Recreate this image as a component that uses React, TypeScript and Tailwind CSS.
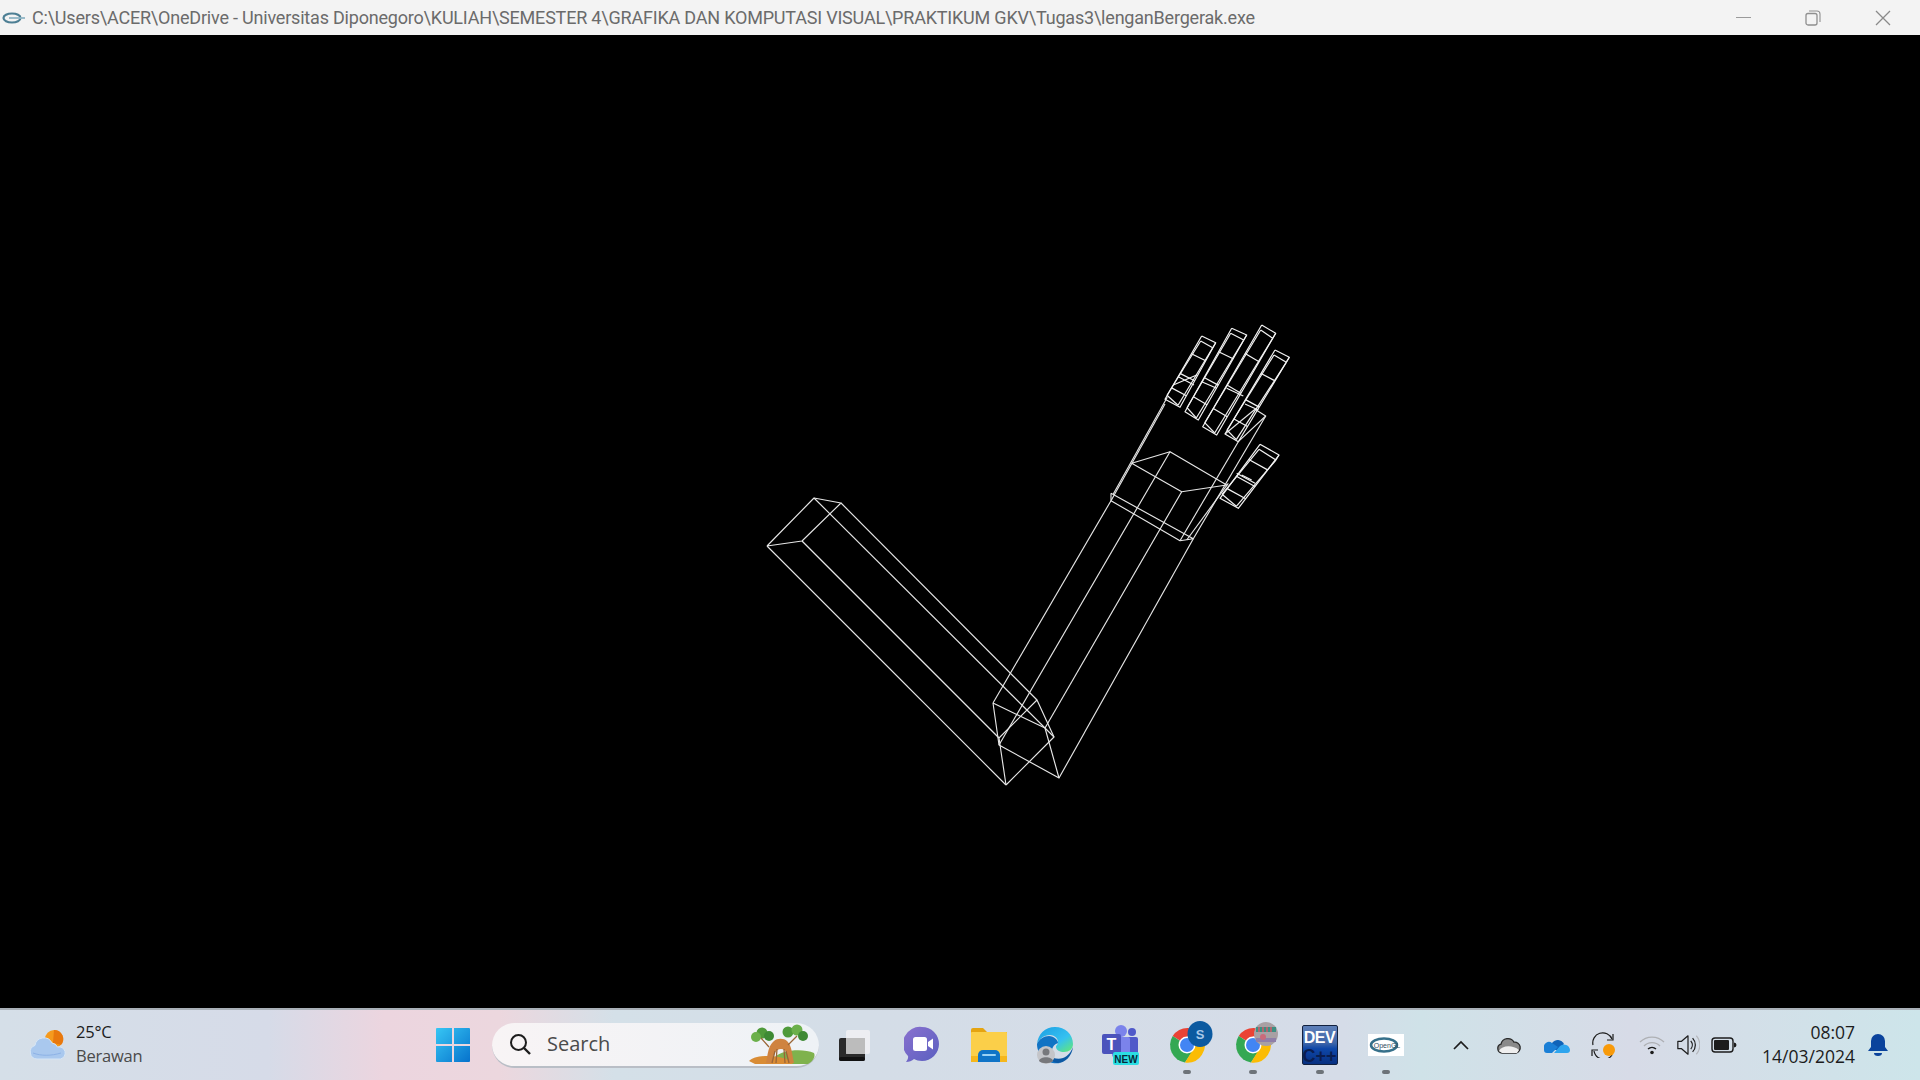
import React from "react";

type P = [number, number];
const z = (x: number, y: number): P => [x / 3 + 1120, y / 3 + 310];
const lerp = (a: P, b: P, t: number): P => [a[0] + (b[0] - a[0]) * t, a[1] + (b[1] - a[1]) * t];
const add = (a: P, dx: number, dy: number): P => [a[0] + dx, a[1] + dy];

const poly = (...pts: P[]) => "M" + pts.map((p) => `${p[0].toFixed(1)} ${p[1].toFixed(1)}`).join("L");

const finger = (tl: P, tr: P, br: P, bl: P) => {
  const out: string[] = [poly(tl, tr, br, bl, tl)];
  const ti = add(tl, -1, 5), tj = add(tr, -3, 5);
  out.push(poly(ti, tj));
  out.push(poly(tj, add(br, -2, -2)));
  out.push(poly(ti, add(bl, 2, -4)));
  out.push(poly(tr, tj));
  [0.28, 0.59, 0.82].forEach((t) => {
    out.push(poly(lerp(tl, bl, t), lerp(tr, br, t)));
  });
  out.push(poly(add(bl, 2, -4), add(br, -2, -2)));
  return out;
};

const upperArm = [
  poly([767, 546], [802, 541], [841, 503], [814, 498], [767, 546]),
  poly([1006, 785], [999, 738], [1037, 700], [1054, 737], [1006, 785]),
  poly([767, 546], [1006, 785]),
  poly([802, 541], [999, 738]),
  poly([841, 503], [1037, 700]),
  poly([814, 498], [1054, 737]),
];

const foreArm = [
  poly([993, 703], [999, 745], [1059, 778], [1045, 728], [993, 703]),
  poly([993, 703], z(-27, 572)),
  poly([999, 745], z(150, 425)),
  poly([1045, 728], z(185, 545)),
  poly([1059, 778], z(220, 686)),
];

const hand = [
  poly(z(35, 460), z(150, 425), z(320, 525), z(185, 545), z(35, 460)),
  poly(z(-27, 550), z(220, 686), z(180, 692), z(-27, 572), z(-27, 550)),
  poly(z(-27, 572), z(135, 282)),
  poly(z(-20, 552), z(142, 262)),
  poly(z(180, 692), z(355, 395)),
  poly(z(220, 686), z(437, 318)),
  poly(z(200, 690), z(325, 520)),
  poly(z(355, 395), z(437, 318), z(405, 298)),
  poly(z(315, 372), z(405, 298)),
];

const fingers = [
  ...finger(z(245, 78), z(287, 98), z(180, 292), z(135, 268)),
  ...finger(z(335, 55), z(380, 75), z(235, 330), z(195, 305)),
  ...finger(z(425, 45), z(467, 70), z(290, 375), z(248, 350)),
  ...finger(z(465, 120), z(508, 142), z(355, 395), z(315, 372)),
  ...finger(z(420, 403), z(477, 435), z(355, 595), z(300, 565)),
  poly(z(160, 225), z(230, 195)),
  poly(z(175, 200), z(222, 225)),
  poly(z(245, 215), z(290, 235)),
  poly(z(320, 235), z(370, 258)),
  poly(z(375, 282), z(415, 300)),
  poly(z(350, 490), z(405, 520)),
  poly(z(365, 495), z(395, 510)),
];

const Wireframe = () => (
  <svg viewBox="0 0 1920 973" className="block w-full h-full">
    <g transform="translate(0 -35)" fill="none" strokeLinejoin="round">
      <g stroke="#e6e6e6" strokeWidth="1.150">
        {[...upperArm, ...foreArm, ...hand].map((d, i) => (
          <path key={i} d={d} />
        ))}
      </g>
      <g stroke="#f2f2f2" strokeWidth="1.200">
        {fingers.map((d, i) => (
          <path key={i} d={d} />
        ))}
      </g>
    </g>
  </svg>
);

const OpenGlMini = () => (
  <svg viewBox="0 0 24 12" className="w-6 h-3">
    <ellipse cx="10" cy="6" rx="8.500" ry="4.500" fill="none" stroke="#4d7f94" strokeWidth="2.200" />
    <path d="M7 6h16" stroke="#8fb5c5" strokeWidth="1.800" />
  </svg>
);

const Weather = () => (
  <svg viewBox="0 0 40 40" className="w-10 h-10">
    <circle cx="27" cy="14" r="9" fill="#f59a1e" />
    <path d="M27 5a9 9 0 0 1 7 15l-8-2z" fill="#e8780e" />
    <path d="M10 34a7 7 0 0 1-2-13.600 9 9 0 0 1 17-2.400 7 7 0 0 1 5.500 4 6 6 0 0 1 3 12z" fill="#a9c8ee" stroke="#d6e6f6" strokeWidth="1" />
    <path d="M6 28c8 3 18 3 28 0" fill="none" stroke="#8db2e6" strokeWidth="1" />
  </svg>
);

const WindowsLogo = () => (
  <svg viewBox="0 0 36 36" className="w-9 h-9">
    <defs>
      <linearGradient id="wg" x1="0" y1="0" x2="1" y2="1">
        <stop offset="0" stopColor="#37c6f4" />
        <stop offset="1" stopColor="#0672cc" />
      </linearGradient>
    </defs>
    <path d="M1 2a1 1 0 0 1 1-1h15v16H1zM19 1h15a1 1 0 0 1 1 1v15H19zM1 19h16v16H2a1 1 0 0 1-1-1zM19 19h16v15a1 1 0 0 1-1 1H19z" fill="url(#wg)" />
  </svg>
);

const Tree = () => (
  <svg viewBox="0 0 70 42" className="w-[70px] h-[42px]">
    <path d="M28 34c6-7 28-9 39-4 2 4-2 9-6 11H40z" fill="#7fb24d" />
    <path d="M2 38c6-6 26-7 40-1l4 4H8z" fill="#d98c35" />
    <circle cx="15" cy="10" r="5.500" fill="#4f9a3a" />
    <circle cx="9" cy="14" r="5" fill="#6bb04a" />
    <circle cx="22" cy="13" r="5" fill="#3e8a34" />
    <circle cx="41" cy="9" r="5.500" fill="#4f9a3a" />
    <circle cx="50" cy="7" r="5.500" fill="#6bb04a" />
    <circle cx="56" cy="13" r="5" fill="#3e8a34" />
    <path d="M19 40c2-10 2-17 8-22 3-3 10-3 13 0 5 5 5 13 7 22h-5c-1-7-2-14-8-14s-8 7-9 14z" fill="#cf8340" />
    <path d="M14 15l8 9M50 13l-9 9M29 40l1-14M38 40l-1-14M25 40l3-12M42 40l-3-12" stroke="#9a6536" strokeWidth="1.300" fill="none" />
  </svg>
);

const TaskView = () => (
  <svg viewBox="0 0 34 34" className="w-[34px] h-[34px]">
    <rect x="2" y="10" width="26" height="23" rx="2" fill="#2a2a2a" />
    <rect x="2" y="29" width="26" height="4" rx="2" fill="#111" />
    <rect x="9" y="2" width="24" height="24" rx="2" fill="#f1f1f3" opacity="0.85" />
    <rect x="9" y="10" width="19" height="16" fill="#b9b9b9" opacity="0.9" />
  </svg>
);

const Chat = () => (
  <svg viewBox="0 0 36 40" className="w-9 h-10">
    <defs>
      <linearGradient id="cg" x1="0" y1="0" x2="1" y2="1">
        <stop offset="0" stopColor="#8a71cf" />
        <stop offset="1" stopColor="#5a5fc0" />
      </linearGradient>
    </defs>
    <path d="M18 2a17 17 0 0 1 0 34c-3 0-6-.7-8-2-2 2-5 3-8 3 1.500-2 2.500-4 2-6A17 17 0 0 1 18 2z" fill="url(#cg)" />
    <rect x="9" y="12" width="14" height="14" rx="2.500" fill="#fff" />
    <path d="M24 17l5-3.500v11L24 21z" fill="#fff" />
  </svg>
);

const Folder = () => (
  <svg viewBox="0 0 38 36" className="w-[38px] h-9">
    <path d="M1 3a2 2 0 0 1 2-2h10l4 4h20v8H1z" fill="#e5a411" />
    <rect x="1" y="5" width="36" height="30" rx="1" fill="#fbcf49" />
    <rect x="1" y="29" width="36" height="6" fill="#f5b71c" />
    <path d="M8 35v-7a5 5 0 0 1 5-5h12a5 5 0 0 1 5 5v7z" fill="#0f74c7" />
    <rect x="12" y="27" width="14" height="2" rx="1" fill="#9ad2f4" />
  </svg>
);

const Edge = () => (
  <svg viewBox="0 0 38 40" className="w-[38px] h-10">
    <defs>
      <linearGradient id="eg" x1="0" y1="0" x2="1" y2="1">
        <stop offset="0" stopColor="#1b9de2" />
        <stop offset="0.6" stopColor="#35c1f1" />
        <stop offset="1" stopColor="#66eb6e" />
      </linearGradient>
    </defs>
    <path d="M19 2c10 0 18 7 18 17 0 5-4 8-9 8-4 0-8-2-8-5 0-2 2-2 2-5 0-4-4-7-8-7-6 0-11 4-13 9C2 9 9 2 19 2z" fill="url(#eg)" />
    <path d="M1 19c2-5 7-8 12-8 5 0 9 4 9 7-2 1-5 2-6 7-1 5 2 11 8 13-12 2-23-7-23-19z" fill="#1173c4" />
    <path d="M37 22c-1 9-8 16-15 16-5 0-8-4-9-8 3 3 9 5 14 3 5-2 8-6 10-11z" fill="#0c59a4" />
    <circle cx="10" cy="30" r="9" fill="#c4c5c9" />
    <circle cx="10" cy="27" r="3.500" fill="#77787c" />
    <path d="M3 36c1-5 13-5 14 0-3 3-11 3-14 0z" fill="#77787c" />
  </svg>
);

const Teams = () => (
  <svg viewBox="0 0 38 42" className="w-[38px] h-[42px]">
    <circle cx="19" cy="7" r="6" fill="#7b83eb" />
    <circle cx="30" cy="8" r="4" fill="#5059c9" />
    <rect x="22" y="13" width="14" height="17" rx="2" fill="#5059c9" />
    <rect x="10" y="13" width="18" height="20" rx="2" fill="#7b83eb" />
    <rect x="0" y="10" width="19" height="20" rx="2" fill="#4b53bc" />
    <text x="9.500" y="26" textAnchor="middle" fontSize="16" fontWeight="700" fill="#fff" fontFamily="'Liberation Sans', sans-serif">T</text>
    <rect x="11" y="28" width="26" height="13" rx="2" fill="#2bdde3" />
    <text x="24" y="38.500" textAnchor="middle" fontSize="10" fontWeight="700" fill="#062b3a" fontFamily="'Liberation Sans', sans-serif">NEW</text>
  </svg>
);

const ChromeBase = () => (
  <g>
    <path d="M20 22L5.700 13A17.500 17.500 0 0 1 35.500 13.500L20 13.500z" fill="#ea4335" />
    <path d="M5.700 13A17.500 17.500 0 0 0 18 39.500l8-12-6-5z" fill="#34a853" />
    <path d="M35.500 13.500A17.500 17.500 0 0 1 18 39.500l8-13 2-8z" fill="#fbbc05" />
    <circle cx="20" cy="22" r="8.500" fill="#fff" />
    <circle cx="20" cy="22" r="7" fill="#4285f4" />
  </g>
);

const Chrome1 = () => (
  <svg viewBox="-4 0 48 44" className="w-12 h-11 overflow-visible">
    <ChromeBase />
    <ellipse cx="33" cy="11" rx="12.500" ry="13" fill="#0c5aa0" />
    <text x="33" y="16" textAnchor="middle" fontSize="13" fontWeight="700" fill="#a8c8e8" fontFamily="'Liberation Sans', sans-serif">S</text>
  </svg>
);

const Chrome2 = () => (
  <svg viewBox="-4 0 48 44" className="w-12 h-11 overflow-visible">
    <ChromeBase />
    <circle cx="33" cy="11" r="12" fill="#a8a0a4" />
    <path d="M23 4h20v5H23z" fill="#3d8f83" />
    <path d="M26 4v5M30 4v5M34 4v5M38 4v5" stroke="#d35b6a" strokeWidth="1.500" />
    <path d="M23 15h20v4H23z" fill="#8f7fa8" />
    <circle cx="30" cy="14" r="3" fill="#c96a7a" />
  </svg>
);

const Dev = () => (
  <div className="w-9 h-[40px] rounded-[2px] bg-[linear-gradient(180deg,#5d7fb8_0%,#3f66a8_45%,#0e47a8_60%,#072f80_100%)] border border-[#12213f] flex flex-col items-center overflow-hidden font-['Liberation_Sans',sans-serif] font-bold leading-none">
    <span className="text-white text-[16px] mt-[4px] tracking-tight">DEV</span>
    <span className="text-[#0a1d50] text-[18px] mt-[1px] whitespace-nowrap">C++</span>
  </div>
);

const OpenGl = () => (
  <div className="w-9 h-[22px] bg-white flex items-center justify-center">
    <svg viewBox="0 0 36 22" className="w-9 h-[22px]">
      <ellipse cx="16" cy="11" rx="13" ry="6.500" fill="none" stroke="#36708a" strokeWidth="2.500" />
      <text x="19" y="13.500" textAnchor="middle" fontSize="7" fill="#2f4f5f" fontFamily="'Liberation Sans', sans-serif">OpenGL</text>
    </svg>
  </div>
);

const Chevron = () => (
  <svg viewBox="0 0 20 20" className="w-5 h-5">
    <path d="M3 14l7-7 7 7" fill="none" stroke="#1c1c1c" strokeWidth="1.700" />
  </svg>
);

const GrayCloud = () => (
  <svg viewBox="0 0 26 18" className="w-[26px] h-[18px]">
    <path d="M6 17a4.500 4.500 0 0 1-1-8.800 7 7 0 0 1 13-2 5.500 5.500 0 0 1 2 10.800z" fill="#8a8a8a" stroke="#2a2a2a" strokeWidth="1.300" />
    <path d="M3 15c3-6 14-6 20-1l-2 3H6z" fill="#efefef" />
  </svg>
);

const OneDrive = () => (
  <svg viewBox="0 0 26 18" className="w-[26px] h-[18px]">
    <path d="M8 7a7 7 0 0 1 12 1l-6 6H5z" fill="#0f63b8" />
    <path d="M0 12a5 5 0 0 1 8-5l6 4-6 6H3a3 3 0 0 1-3-3z" fill="#1a7fd6" />
    <path d="M10 17l6-7a6 6 0 0 1 10 4 3 3 0 0 1-3 3z" fill="#2ea5ee" />
  </svg>
);

const Sync = () => (
  <svg viewBox="0 0 26 26" className="w-[26px] h-[26px]">
    <path d="M2 13A10 10 0 0 1 21 7" fill="none" stroke="#1a1a1a" strokeWidth="1.200" />
    <path d="M22 2v6h-6" fill="none" stroke="#1a1a1a" strokeWidth="1.200" />
    <path d="M21 23A10 10 0 0 1 3 19" fill="none" stroke="#1a1a1a" strokeWidth="1.200" />
    <path d="M1 24v-6h6" fill="none" stroke="#1a1a1a" strokeWidth="1.200" />
    <circle cx="18" cy="18" r="6" fill="#f89a0a" />
  </svg>
);

const Wifi = () => (
  <svg viewBox="0 0 26 20" className="w-[26px] h-5">
    <path d="M1 7a17 17 0 0 1 24 0M5 11a11 11 0 0 1 16 0" fill="none" stroke="#aeb0b4" strokeWidth="1.300" />
    <path d="M9 14a6 6 0 0 1 8 0" fill="none" stroke="#1c1c1c" strokeWidth="1.400" />
    <circle cx="13" cy="17.500" r="1.800" fill="#1c1c1c" />
  </svg>
);

const Volume = () => (
  <svg viewBox="0 0 26 26" className="w-6 h-6">
    <path d="M2 9h4l7-6v20l-7-6H2z" fill="none" stroke="#1c1c1c" strokeWidth="1.300" strokeLinejoin="round" />
    <path d="M16 8.500a7 7 0 0 1 0 9" fill="none" stroke="#1c1c1c" strokeWidth="1.300" />
    <path d="M18 5.500a11 11 0 0 1 0 15" fill="none" stroke="#1c1c1c" strokeWidth="1.300" />
    <path d="M22 3a15 15 0 0 1 0 20" fill="none" stroke="#b5b7bc" strokeWidth="1.300" />
  </svg>
);

const Battery = () => (
  <svg viewBox="0 0 26 18" className="w-[26px] h-[18px]">
    <rect x="1" y="2" width="21" height="14" rx="3" fill="none" stroke="#1c1c1c" strokeWidth="1.400" />
    <rect x="3" y="4" width="15" height="10" rx="1" fill="#1c1c1c" />
    <path d="M23 6.500a2.500 2.500 0 0 1 0 5z" fill="#1c1c1c" />
  </svg>
);

const Bell = () => (
  <svg viewBox="0 0 22 24" className="w-[22px] h-6">
    <path d="M11 1a7 7 0 0 1 7 7v6l3 4H1l3-4V8a7 7 0 0 1 7-7z" fill="#0a439c" />
    <path d="M7 20h8a4 3 0 0 1-8 0z" fill="#0a439c" />
  </svg>
);

const Cell = ({ w, dot, children }: { w: string; dot?: boolean; children: React.ReactNode }) => (
  <div className={`${w} relative h-full flex items-center justify-center shrink-0`}>
    {children}
    {dot && <div className="absolute bottom-[6px] left-1/2 -translate-x-1/2 w-2 h-1 rounded-full bg-[#6d7379]" />}
  </div>
);

export default function App() {
  return (
    <div className="w-[1920px] h-[1080px] flex flex-col overflow-hidden bg-black font-['Open_Sans',sans-serif]">
      <header className="h-[35px] shrink-0 bg-[#f3f3f3] flex items-center">
        <div className="pl-[2px] w-[32px] flex items-center shrink-0"><OpenGlMini /></div>
        <div className="text-[18px] leading-none text-[#6b6b6b] whitespace-nowrap tracking-[-0.2px] font-['Roboto',sans-serif]">
          C:\Users\ACER\OneDrive - Universitas Diponegoro\KULIAH\SEMESTER 4\GRAFIKA DAN KOMPUTASI VISUAL\PRAKTIKUM GKV\Tugas3\lenganBergerak.exe
        </div>
        <div className="ml-auto mr-[2px] flex items-center text-[#8a8a8a]">
          <div className="w-[70px] flex justify-center"><div className="w-[15px] h-px bg-[#9a9a9a]" /></div>
          <div className="w-[70px] flex justify-center">
            <svg viewBox="0 0 16 16" className="w-4 h-4"><rect x="1" y="3.500" width="11" height="11.500" rx="2" fill="none" stroke="#8f8f8f" strokeWidth="1.300" /><path d="M4 1h8a3 3 0 0 1 3 3v8" fill="none" stroke="#8f8f8f" strokeWidth="1.100" /></svg>
          </div>
          <div className="w-[70px] flex justify-center">
            <svg viewBox="0 0 16 16" className="w-4 h-4"><path d="M1 1l14 14M15 1L1 15" stroke="#8a8a8a" strokeWidth="1.300" /></svg>
          </div>
        </div>
      </header>
      <main className="flex-1 bg-black min-h-0">
        <Wireframe />
      </main>
      <footer className="h-[72px] shrink-0 border-t-2 border-[#a9b0b8] flex items-center text-[#1c1c1c] bg-[linear-gradient(90deg,#d5dfe8_0%,#d6dbe8_14%,#ecd5df_20%,#ecd7de_26%,#d4e0e8_32%,#d4dde7_45%,#d5dce8_70%,#cfe2e8_74%,#d7dbe7_85%,#cde5ea_100%)]">
        <div className="w-[420px] h-full flex items-center pl-[27px] shrink-0">
          <Weather />
          <div className="ml-[9px] -mt-[2px] leading-[24px] text-[16.500px]">
            <div className="text-[#1c1c1c] tracking-[-0.2px]">25°C</div>
            <div className="text-[#4a4a4a] tracking-[-0.2px]">Berawan</div>
          </div>
        </div>
        <Cell w="w-[66px]"><WindowsLogo /></Cell>
        <div className="ml-[6px] w-[327px] h-[45px] rounded-full bg-[linear-gradient(90deg,#f8f4f5,#eef2f6)] border-b-2 border-[#b9bec6] flex items-center pl-[16px] pr-[2px] shrink-0">
          <svg viewBox="0 0 24 24" className="w-6 h-6"><circle cx="10.500" cy="10.500" r="7.500" fill="none" stroke="#1c1c1c" strokeWidth="2" /><path d="M16 16l6 6" stroke="#1c1c1c" strokeWidth="2.400" /></svg>
          <span className="ml-[15px] text-[20px] text-[#4b4b4b]">Search</span>
          <div className="ml-auto"><Tree /></div>
        </div>
        <div className="w-[2px] shrink-0" />
        <Cell w="w-[66px]"><TaskView /></Cell>
        <Cell w="w-[69px]"><Chat /></Cell>
        <Cell w="w-[66px]"><Folder /></Cell>
        <Cell w="w-[66px]"><Edge /></Cell>
        <Cell w="w-[66px]"><Teams /></Cell>
        <Cell w="w-[66px]" dot><Chrome1 /></Cell>
        <Cell w="w-[66px]" dot><Chrome2 /></Cell>
        <Cell w="w-[67px]" dot><Dev /></Cell>
        <Cell w="w-[66px]" dot><OpenGl /></Cell>
        <div className="w-[18px] shrink-0" />
        <Cell w="w-[48px]"><Chevron /></Cell>
        <Cell w="w-[48px]"><GrayCloud /></Cell>
        <Cell w="w-[47px]"><OneDrive /></Cell>
        <Cell w="w-[48px]"><Sync /></Cell>
        <Cell w="w-[47px]"><Wifi /></Cell>
        <Cell w="w-[26px]"><Volume /></Cell>
        <Cell w="w-[46px]"><Battery /></Cell>
        <div className="w-[108px] -mt-[2px] shrink-0 text-right text-[17.500px] leading-[24px] text-[#1c1c1c]">
          <div>08:07</div>
          <div>14/03/2024</div>
        </div>
        <div className="w-[46px] shrink-0 flex justify-center"><Bell /></div>
      </footer>
    </div>
  );
}
